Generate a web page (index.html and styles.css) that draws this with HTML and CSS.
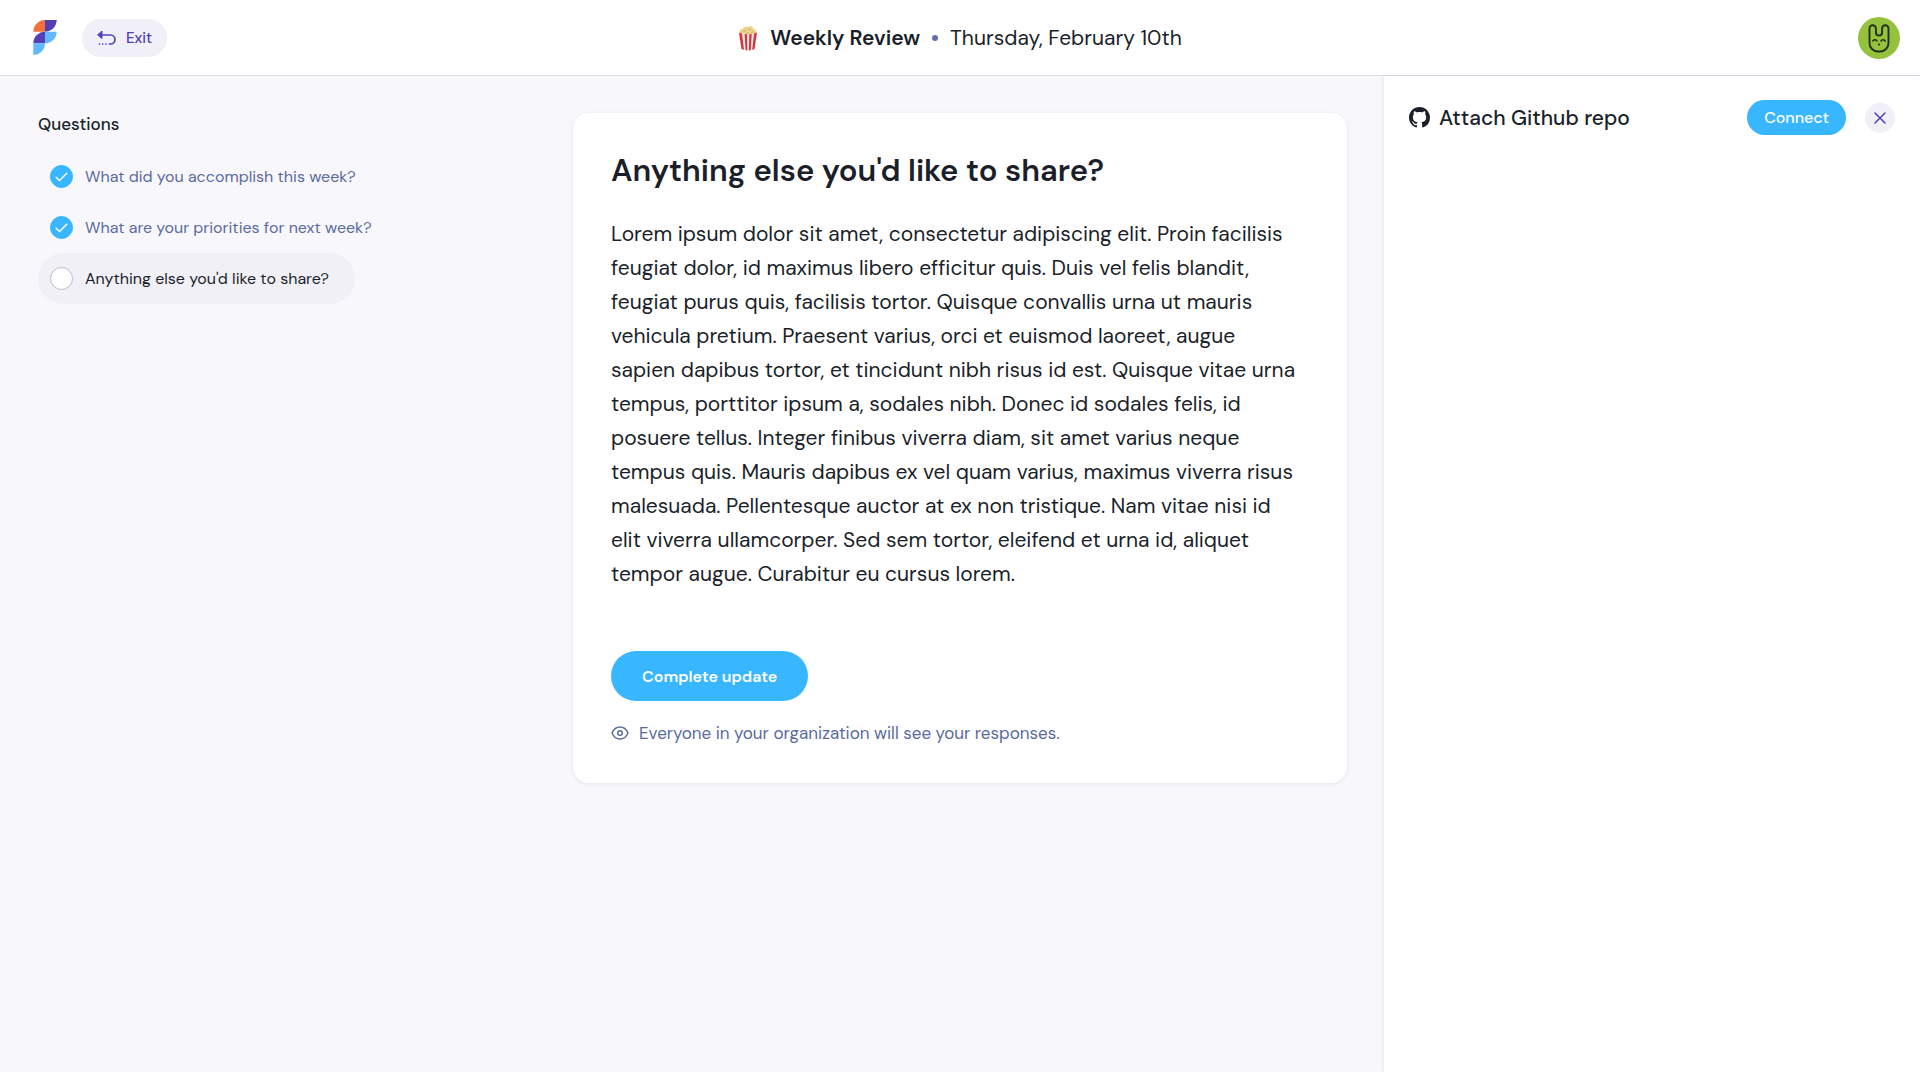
FILE: index.html
```html
<!DOCTYPE html>
<html lang="en">
<head>
<meta charset="UTF-8" />
<meta name="viewport" content="width=device-width, initial-scale=1.0"/>
<title>Weekly Review</title>
<link rel="stylesheet" href="styles.css">
</head>
<body>
<header class="topbar">
  <div class="topbar-left">
    <a href="#" class="logo" aria-label="Home">
      <svg width="24" height="35" viewBox="0 0 24 36">
        <path d="M0 12A12 12 0 0 1 12 0V12Z" fill="#f4703a"/>
        <path d="M12 0H24A12 12 0 0 1 12 12Z" fill="#5440b5"/>
        <path d="M0 24A12 12 0 0 1 12 12V24Z" fill="#5440b5"/>
        <path d="M12 12H24A12 12 0 0 1 12 24Z" fill="#62b8fc"/>
        <path d="M0 24H12A12 12 0 0 1 0 36Z" fill="#62b8fc"/>
      </svg>
    </a>
    <button class="exit-button" type="button">
      <svg width="19" height="16" viewBox="0 0 19 16" fill="none" stroke="#5440b5" stroke-width="1.7" stroke-linecap="round">
        <path d="M4 5H13.500A4.500 4.500 0 0 1 13.500 14H12.500"/>
        <path d="M5 1.500V8.500L0.800 5Z" fill="#5440b5" stroke-width="1" stroke-linejoin="round"/>
        <path d="M2.500 14H2.510M5.700 14H5.710M8.900 14H8.910"/>
      </svg>
      Exit
    </button>
  </div>

  <div class="topbar-title">
    <svg class="popcorn" width="20" height="26" viewBox="0 0 20 26">
      <path d="M2 8C0.500 5.500 3 3.500 5 4C5.500 1.500 8.500 1 10 2C12 0 15.500 1.500 15.500 4C18 4 19 6.500 18 8.500L15 10H4Z" fill="#ecd48f"/>
      <path d="M5 6.500Q6.500 4.500 8 6.500M10 4.500Q12 3 13 5M13 8Q14.500 6 16 7.500M8 9Q9.500 7 11 8.500" fill="none" stroke="#c9a255" stroke-width="0.800"/>
      <path d="M1 7.500Q10 11 19 7.500L16.500 24Q10 26.500 3.500 24Z" fill="#f7eeee"/>
      <path d="M1 7.500L4 8.500L6 24.800L3.500 24ZM6.600 9.100L9 9.300L9.400 25.500L7.600 25.300ZM11.300 9.300L13.700 9.100L12.800 25.300L10.900 25.500ZM16 8.500L19 7.500L16.500 24L14.200 24.900Z" fill="#d9343b"/>
    </svg>
    <h1>Weekly Review</h1>
    <span class="dot"></span>
    <span>Thursday, February 10th</span>
  </div>

  <button class="avatar" type="button" aria-label="Account">
    <svg width="42" height="42" viewBox="0 0 42 42" fill="none" stroke="#22301c" stroke-linecap="round">
      <path d="M11.500 11.500A3.200 3.200 0 0 1 17.900 11.500V15.500A3.100 3.100 0 0 0 24.100 15.500V11.500A3.200 3.200 0 0 1 30.500 11.500V26A8.500 8.500 0 0 1 22 34.500H20A8.500 8.500 0 0 1 11.500 26Z" stroke-width="1.900"/>
      <path d="M14.800 24Q17 21.600 19 24M23 24Q25 21.600 27.200 24" stroke-width="1.600"/>
      <circle cx="21" cy="27.500" r="1.100" fill="#22301c" stroke="none"/>
    </svg>
  </button>
</header>

<div class="layout">
  <nav class="questions">
    <h2>Questions</h2>
    <ul>
      <li>
        <a href="#">
          <span class="status done">
            <svg width="13" height="10" viewBox="0 0 13 10"><path d="M1.200 5.200L4.500 8.500L11.800 1.200"/></svg>
          </span>
          What did you accomplish this week?
        </a>
      </li>
      <li>
        <a href="#">
          <span class="status done">
            <svg width="13" height="10" viewBox="0 0 13 10"><path d="M1.200 5.200L4.500 8.500L11.800 1.200"/></svg>
          </span>
          What are your priorities for next week?
        </a>
      </li>
      <li>
        <a href="#" class="current">
          <span class="status"></span>
          Anything else you'd like to share?
        </a>
      </li>
    </ul>
  </nav>

  <main>
    <div class="card">
      <h2>Anything else you'd like to share?</h2>
      <p class="answer">
        Lorem ipsum dolor sit amet, consectetur adipiscing elit. Proin facilisis
        feugiat dolor, id maximus libero efficitur quis. Duis vel felis blandit,
        feugiat purus quis, facilisis tortor. Quisque convallis urna ut mauris
        vehicula pretium. Praesent varius, orci et euismod laoreet, augue
        sapien dapibus tortor, et tincidunt nibh risus id est. Quisque vitae urna
        tempus, porttitor ipsum a, sodales nibh. Donec id sodales felis, id
        posuere tellus. Integer finibus viverra diam, sit amet varius neque
        tempus quis. Mauris dapibus ex vel quam varius, maximus viverra risus
        malesuada. Pellentesque auctor at ex non tristique. Nam vitae nisi id
        elit viverra ullamcorper. Sed sem tortor, eleifend et urna id, aliquet
        tempor augue. Curabitur eu cursus lorem.
      </p>
      <button class="complete-button" type="button">Complete update</button>
      <p class="visibility">
        <svg width="18" height="14" viewBox="0 0 18 14" fill="none" stroke="#5a6b9e" stroke-width="1.500">
          <path d="M1 7C2.500 3.500 5.500 1 9 1S15.500 3.500 17 7C15.500 10.500 12.500 13 9 13S2.500 10.500 1 7Z" stroke-linejoin="round"/>
          <circle cx="9" cy="7" r="2.300"/>
        </svg>
        Everyone in your organization will see your responses.
      </p>
    </div>
  </main>

  <aside class="attach">
    <div class="attach-row">
      <svg width="21" height="21" viewBox="0 0 16 16" fill="#1b1f2a">
        <path d="M8 0C3.580 0 0 3.580 0 8c0 3.540 2.290 6.530 5.470 7.590.4.070.55-.17.55-.38 0-.19-.01-.82-.01-1.490-2.010.37-2.530-.49-2.690-.94-.09-.23-.48-.94-.82-1.130-.28-.15-.68-.52-.01-.53.63-.01 1.080.58 1.230.82.72 1.210 1.870.87 2.330.66.07-.52.28-.87.51-1.070-1.780-.2-3.640-.89-3.640-3.950 0-.87.31-1.590.82-2.150-.08-.2-.36-1.020.08-2.120 0 0 .67-.21 2.200.82.64-.18 1.320-.27 2-.27s1.360.09 2 .27c1.530-1.040 2.200-.82 2.200-.82.44 1.100.16 1.920.08 2.120.51.56.82 1.270.82 2.150 0 3.070-1.870 3.750-3.650 3.950.29.25.54.73.54 1.480 0 1.070-.01 1.930-.01 2.200 0 .21.15.46.55.38A8.010 8.010 0 0 0 16 8c0-4.420-3.580-8-8-8Z"/>
      </svg>
      <h2>Attach Github repo</h2>
      <button class="connect-button" type="button">Connect</button>
      <button class="close-button" type="button" aria-label="Close">
        <svg width="12" height="12" viewBox="0 0 12 12"><path d="M1 1L11 11M11 1L1 11"/></svg>
      </button>
    </div>
  </aside>
</div>
</body>
</html>
```
FILE: styles.css
```css
* {
  box-sizing: border-box;
}

body {
  margin: 0;
  min-height: 100vh;
  display: flex;
  flex-direction: column;
  font-family: "DM Sans", Inter, "Liberation Sans", sans-serif;
  font-variant-ligatures: none;
  background: #f7f7fc;
  color: #1b1f2a;
}

h1,
h2,
p,
ul {
  margin: 0;
  padding: 0;
}

a {
  color: inherit;
  text-decoration: none;
}

svg {
  display: block;
  flex-shrink: 0;
}

button {
  border: none;
  padding: 0;
  font-family: inherit;
  cursor: pointer;
}

.topbar {
  display: grid;
  grid-template-columns: 1fr auto 1fr;
  align-items: center;
  height: 76px;
  padding: 0 20px;
  background: white;
  border-bottom: 1px solid #dcdce8;
}

.topbar-left {
  display: flex;
  align-items: center;
  gap: 25px;
  padding-left: 13px;
}

.exit-button {
  display: flex;
  align-items: center;
  gap: 10px;
  height: 38px;
  padding: 0 15px;
  border-radius: 19px;
  background: #f1f0f8;
  color: #5440b5;
  font-size: 15px;
  font-weight: 500;
}

.topbar-title {
  display: flex;
  align-items: center;
  font-size: 21px;
}

.topbar-title h1 {
  margin-left: 12px;
  font-size: 21px;
  font-weight: 600;
}

.dot {
  width: 6px;
  height: 6px;
  margin: 0 12px;
  border-radius: 50%;
  background: #5f70ac;
}

.avatar {
  justify-self: end;
  width: 42px;
  height: 42px;
  border-radius: 50%;
  background: #95c23d;
}

.layout {
  flex: 1;
  display: grid;
  grid-template-columns: 1fr minmax(0, 774px) 1fr;
}

.questions {
  padding: 36px 38px;
}

.questions h2 {
  margin-bottom: 15px;
  font-size: 17px;
  line-height: 24px;
  font-weight: 500;
}

.questions ul {
  list-style: none;
}

.questions li {
  display: flex;
}

.questions a {
  display: flex;
  align-items: center;
  gap: 12px;
  height: 51px;
  padding: 0 26px 0 12px;
  border-radius: 26px;
  color: #5a6b9e;
  font-size: 16px;
}

.questions .current {
  background: #f1f0f7;
  color: #1b1f2a;
}

.status {
  display: flex;
  align-items: center;
  justify-content: center;
  width: 23px;
  height: 23px;
  border: 1px solid #b9bbd6;
  border-radius: 50%;
  background: white;
}

.status.done {
  border-color: #38b6ff;
  background: #38b6ff;
}

.status path {
  fill: none;
  stroke: white;
  stroke-width: 1.5;
  stroke-linecap: round;
  stroke-linejoin: round;
}

.card {
  margin-top: 37px;
  padding: 38px;
  border-radius: 16px;
  background: white;
  box-shadow: 0 1px 4px rgba(30, 30, 80, 0.08);
}

.card h2 {
  margin-bottom: 26px;
  font-size: 31px;
  line-height: 40px;
  font-weight: 600;
}

.answer {
  max-width: 688px;
  font-size: 21px;
  line-height: 34px;
}

.complete-button {
  height: 50px;
  margin-top: 60px;
  padding: 0 31px;
  border-radius: 25px;
  background: #38b6ff;
  color: white;
  font-size: 16px;
  font-weight: 600;
}

.visibility {
  display: flex;
  align-items: center;
  gap: 10px;
  margin-top: 20px;
  font-size: 17px;
  line-height: 24px;
  color: #5a6b9e;
}

.attach {
  margin-left: 37px;
  padding: 24px 25px;
  background: white;
  box-shadow: 0 0 4px rgba(30, 30, 80, 0.1);
}

.attach-row {
  display: flex;
  align-items: center;
}

.attach h2 {
  flex: 1;
  margin-left: 9px;
  font-size: 21px;
  line-height: 24px;
  font-weight: 500;
}

.connect-button {
  height: 35px;
  padding: 0 17px;
  border-radius: 18px;
  background: #38b6ff;
  color: white;
  font-size: 16px;
  font-weight: 500;
}

.close-button {
  display: flex;
  align-items: center;
  justify-content: center;
  width: 30px;
  height: 30px;
  margin-left: 19px;
  border-radius: 50%;
  background: #f1f0f8;
}

.close-button path {
  stroke: #5440b5;
  stroke-width: 1.5;
  stroke-linecap: round;
}
```
